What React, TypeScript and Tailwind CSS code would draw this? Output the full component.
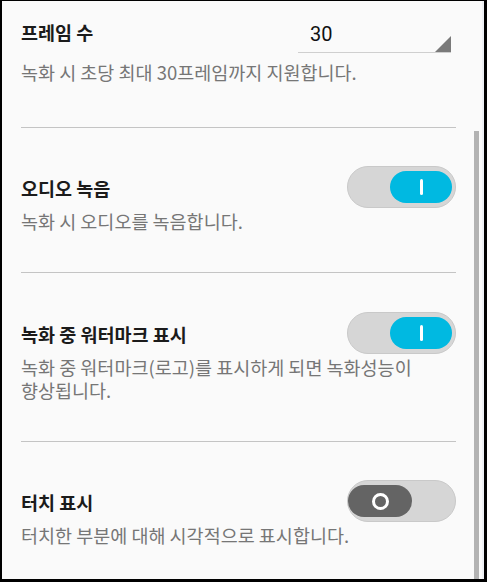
const font = { fontFamily: '"Noto Sans CJK KR", "Noto Sans", sans-serif' };

function Toggle({ on }: { on: boolean }) {
  return (
    <div
      className={`flex h-[42px] w-[109px] shrink-0 items-center rounded-full border border-[#c9c9c9] bg-[#d6d6d6] ${
        on ? "justify-end pr-[3px]" : "justify-start pl-[0px]"
      }`}
    >
      {on ? (
        <div className="flex h-[32px] w-[62px] items-center justify-center rounded-full bg-[#00b9e1]">
          <div className="h-[16px] w-[3px] rounded-sm bg-white" />
        </div>
      ) : (
        <div className="flex h-[32px] w-[64px] items-center justify-center rounded-full bg-[#646464]">
          <div className="h-[17px] w-[17px] rounded-full border-[3px] border-white" />
        </div>
      )}
    </div>
  );
}

function Section({
  title,
  lines,
  on,
  last,
  top = "pt-[38px]",
}: {
  title: string;
  lines: string[];
  on: boolean;
  last?: boolean;
  top?: string;
}) {
  return (
    <div className={`${top} ${last ? "" : "pb-[39px] border-b border-[#c4c4c4]"}`}>
      <div className="flex h-[42px] items-center justify-between">
        <span className="pt-[3px] text-[18.5px] font-bold text-[#1b1b1b]">{title}</span>
        <Toggle on={on} />
      </div>
      <div className="mt-[2px]">
        {lines.map((l) => (
          <p key={l} className="h-[23px] text-[18.5px] leading-[23px] text-[#767676]">
            {l}
          </p>
        ))}
      </div>
    </div>
  );
}

export default function App() {
  return (
    <div
      className="flex h-[582px] w-[487px] border-t-[1px] border-l-[2px] border-r-[3px] border-b-[3px] border-black bg-[#fafafa]"
      style={font}
    >
      <div className="w-[472px] pl-[19px] pr-[18px]">
        {/* frame count */}
        <div className="border-b border-[#c4c4c4] pb-[43px] pt-[11px]">
          <div className="flex h-[42px] items-center justify-between">
            <span className="text-[18.5px] font-bold text-[#1b1b1b]">프레임 수</span>
            <div className="relative mr-[5px] h-[40px] w-[153px] border-b border-[#cfcfcf]">
              <span
                className="absolute left-[12px] top-[9px] text-[20px] leading-[24px] text-[#111]"
                style={{ fontFamily: "Roboto, sans-serif" }}
              >
                30
              </span>
              <svg className="absolute bottom-0 right-0" width="16" height="16" viewBox="0 0 16 16">
                <polygon points="16,0 16,16 0,16" fill="#7a7a7a" />
              </svg>
            </div>
          </div>
          <p className="mt-[7px] text-[18.5px] leading-[23px] text-[#767676]">
            녹화 시 초당 최대 30프레임까지 지원합니다.
          </p>
        </div>

        <Section title="오디오 녹음" lines={["녹화 시 오디오를 녹음합니다."]} on />
        <Section
          title="녹화 중 워터마크 표시"
          lines={["녹화 중 워터마크(로고)를 표시하게 되면 녹화성능이", "향상됩니다."]}
          on
          top="pt-[39px]"
        />
        <Section title="터치 표시" lines={["터치한 부분에 대해 시각적으로 표시합니다."]} on={false} last />
      </div>

      {/* scrollbar */}
      <div className="flex w-[5px] flex-col">
        <div className="h-[130px]" />
        <div className="flex-1 bg-[#b3b3b3]" />
      </div>
      <div className="w-[3px]" />
      <div className="w-[2px] bg-[#eef0f4]" />
    </div>
  );
}
